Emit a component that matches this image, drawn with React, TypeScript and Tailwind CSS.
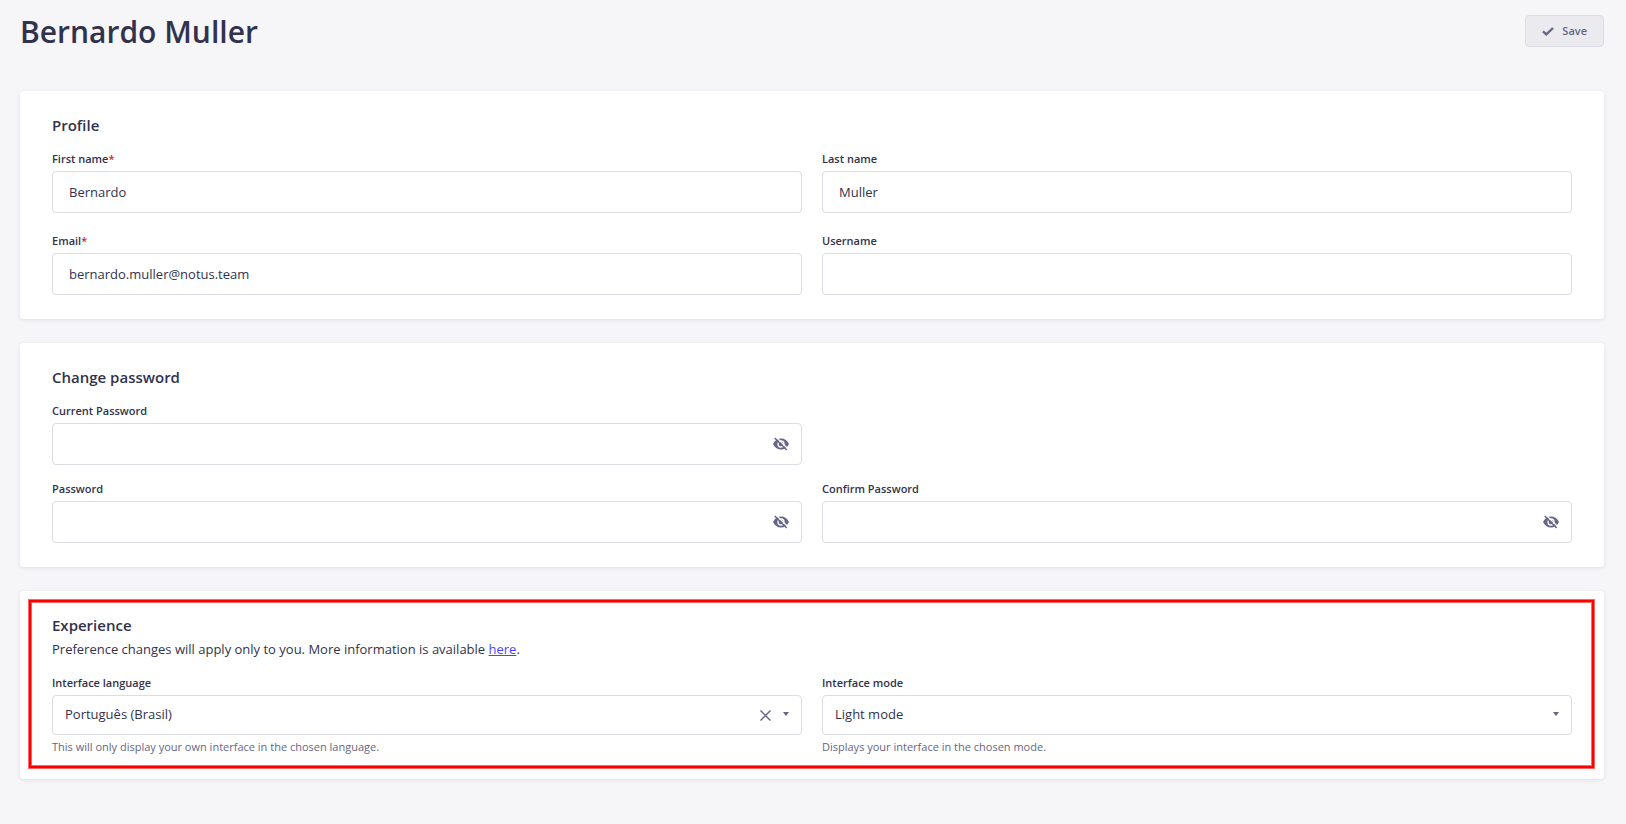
import { useState } from 'react';
import type { InputHTMLAttributes, ReactNode } from 'react';

const controlClass =
  'w-full rounded-[4px] border border-[#dcdce4] bg-white text-[13px] text-[#32324d] outline-none focus:border-[#4945ff]';

function Card({ title, description, children }: { title: string; description?: ReactNode; children: ReactNode }) {
  return (
    <section className="rounded-[4px] bg-white px-8 py-6 shadow-[0_1px_4px_rgba(33,33,52,0.1)]">
      <h2 className="text-[15px] leading-5 font-semibold">{title}</h2>
      {description && <p className="mt-1 text-[13px] leading-5">{description}</p>}
      <div className="mt-4">{children}</div>
    </section>
  );
}

function Label({ htmlFor, required, children }: { htmlFor: string; required?: boolean; children: ReactNode }) {
  return (
    <label htmlFor={htmlFor} className="mb-1 block text-[11px] leading-4 font-semibold">
      {children}
      {required && <span className="text-[#d02b20]">*</span>}
    </label>
  );
}

type FieldProps = InputHTMLAttributes<HTMLInputElement> & { id: string; label: string };

function TextField({ id, label, required, ...rest }: FieldProps) {
  return (
    <div>
      <Label htmlFor={id} required={required}>{label}</Label>
      <input id={id} name={id} required={required} className={`${controlClass} h-[42px] px-4`} {...rest} />
    </div>
  );
}

function EyeOffIcon() {
  return (
    <svg viewBox="0 0 16 14" className="h-[14px] w-4" fill="none" aria-hidden="true">
      <path d="M0 7C1.500 3.500 4.500 1.500 8 1.500S14.500 3.500 16 7c-1.500 3.500-4.500 5.500-8 5.500S1.500 10.500 0 7Z" fill="currentColor" />
      <circle cx="8" cy="7" r="3" stroke="white" strokeWidth="1.300" />
      <path d="M2.800-.2l12 12" stroke="white" strokeWidth="1.300" />
      <path d="M1.700 1l12 12" stroke="currentColor" strokeWidth="1.500" />
    </svg>
  );
}

function PasswordField({ id, label }: { id: string; label: string }) {
  const [visible, setVisible] = useState(false);
  return (
    <div>
      <Label htmlFor={id}>{label}</Label>
      <div className="relative">
        <input id={id} name={id} type={visible ? 'text' : 'password'} className={`${controlClass} h-[42px] pr-12 pl-4`} />
        <button
          type="button"
          aria-label="Toggle password visibility"
          onClick={() => setVisible(!visible)}
          className="absolute inset-y-0 right-[13px] flex items-center text-[#666687]"
        >
          <EyeOffIcon />
        </button>
      </div>
    </div>
  );
}

type SelectProps = { id: string; label: string; hint: string; options: string[]; clearable?: boolean };

function SelectField({ id, label, hint, options, clearable }: SelectProps) {
  const [value, setValue] = useState(options[0]);
  return (
    <div>
      <Label htmlFor={id}>{label}</Label>
      <div className="relative">
        <select
          id={id}
          value={value}
          onChange={(event) => setValue(event.target.value)}
          className={`${controlClass} h-10 appearance-none px-3`}
        >
          {clearable && <option value="" />}
          {options.map((option) => (
            <option key={option}>{option}</option>
          ))}
        </select>
        <div className="pointer-events-none absolute inset-y-0 right-[13px] flex items-center gap-3 text-[#666687]">
          {clearable && (
            <button type="button" aria-label="Clear" onClick={() => setValue('')} className="pointer-events-auto">
              <svg viewBox="0 0 11 11" className="h-[11px] w-[11px]" stroke="currentColor" strokeWidth="1.500" aria-hidden="true">
                <path d="M.5.5l10 10M10.500.5l-10 10" />
              </svg>
            </button>
          )}
          <svg viewBox="0 0 6 6" className="h-[6px] w-[6px]" fill="currentColor" aria-hidden="true">
            <path d="M0 0h6L3.300 3.700h-.6z" />
          </svg>
        </div>
      </div>
      <p className="mt-1 text-[11px] leading-4 text-[#666687]">{hint}</p>
    </div>
  );
}

export default function App() {
  return (
    <main className="min-h-screen bg-[#f6f6f9] pr-[22px] pb-11 pl-5 font-['Open_Sans','Noto_Sans',sans-serif] text-[#32324d]">
      <header className="flex items-start justify-between pt-3 pb-[39px]">
        <h1 className="text-[30px] leading-10 font-semibold">Bernardo Muller</h1>
        <button
          type="submit"
          form="profile-form"
          className="mt-[3px] flex h-8 items-center gap-2 rounded-[4px] border border-[#dcdce4] bg-[#eaeaef] px-4 text-[11px] font-semibold text-[#666687]"
        >
          <svg viewBox="0 0 12 9" className="h-[9px] w-3" fill="none" stroke="currentColor" strokeWidth="2.400" aria-hidden="true">
            <path d="M1 4.400l3.300 3L11 1" />
          </svg>
          Save
        </button>
      </header>
      <form id="profile-form" className="flex flex-col gap-6" onSubmit={(event) => event.preventDefault()}>
        <Card title="Profile">
          <div className="grid grid-cols-2 gap-5">
            <TextField id="firstname" label="First name" required defaultValue="Bernardo" />
            <TextField id="lastname" label="Last name" defaultValue="Muller" />
            <TextField id="email" label="Email" type="email" required defaultValue="bernardo.muller@notus.team" />
            <TextField id="username" label="Username" />
          </div>
        </Card>
        <Card title="Change password">
          <div className="grid grid-cols-2 gap-x-5 gap-y-4">
            <PasswordField id="current-password" label="Current Password" />
            <div />
            <PasswordField id="password" label="Password" />
            <PasswordField id="confirm-password" label="Confirm Password" />
          </div>
        </Card>
        <div className="relative">
          <Card
            title="Experience"
            description={
              <>
                Preference changes will apply only to you. More information is available{' '}
                <a href="#translations" className="text-[#4945ff] underline">here</a>.
              </>
            }
          >
            <div className="grid grid-cols-2 gap-5">
              <SelectField
                id="language"
                label="Interface language"
                hint="This will only display your own interface in the chosen language."
                options={['Português (Brasil)', 'English']}
                clearable
              />
              <SelectField
                id="mode"
                label="Interface mode"
                hint="Displays your interface in the chosen mode."
                options={['Light mode', 'Dark mode']}
              />
            </div>
          </Card>
          <div className="pointer-events-none absolute top-[9px] right-[10px] bottom-[11px] left-[9px] border-2 border-[#ff0000] shadow-[0_0_0_1px_#ff6666,inset_0_0_0_1px_#ff6666]" />
        </div>
      </form>
    </main>
  );
}
